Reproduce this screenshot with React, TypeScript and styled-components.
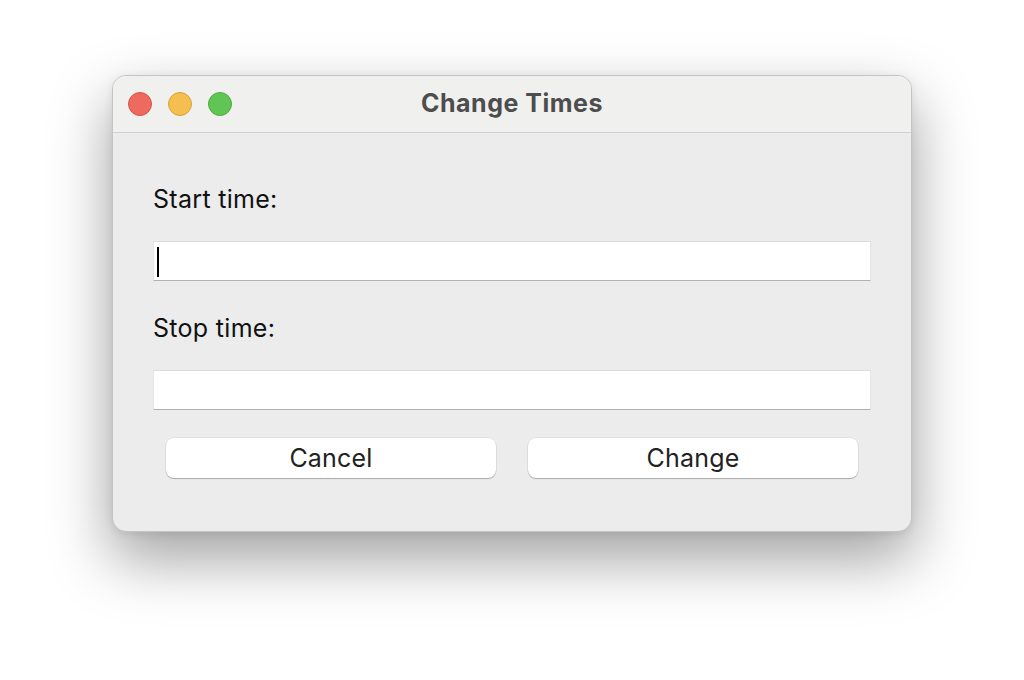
import React from "react";
import styled, { createGlobalStyle } from "styled-components";

const Global = createGlobalStyle`
  html, body { margin: 0; padding: 0; background: #ffffff; }
  body { font-family: Inter, "Noto Sans", sans-serif; }
`;

const Page = styled.div`
  width: 1024px;
  height: 680px;
  box-sizing: border-box;
  padding: 75px 112px 0 112px;
`;

const Window = styled.div`
  width: 800px;
  height: 457px;
  box-sizing: border-box;
  border: 1px solid #c4c4c4;
  border-radius: 14px;
  background: #ececec;
  overflow: hidden;
  display: flex;
  flex-direction: column;
  box-shadow: 0 26px 60px 2px rgba(0, 0, 0, 0.36), 0 2px 8px rgba(0, 0, 0, 0.08);
`;

const TitleBar = styled.div`
  position: relative;
  height: 57px;
  flex: none;
  box-sizing: border-box;
  background: #f0f0ef;
  border-bottom: 1px solid #d0d0d0;
  display: flex;
  justify-content: center;
  padding-top: 12px;
`;

const Lights = styled.div`
  position: absolute;
  left: 15px;
  top: 16px;
  display: flex;
  gap: 16px;
`;

const Light = styled.span<{ $fill: string; $edge: string }>`
  width: 24px;
  height: 24px;
  border-radius: 50%;
  box-sizing: border-box;
  background: ${(p) => p.$fill};
  border: 1px solid ${(p) => p.$edge};
`;

const Title = styled.div`
  font-size: 25px;
  font-weight: 700;
  letter-spacing: 0.5px;
  line-height: normal;
  color: #4d4d4d;
`;

const Content = styled.div`
  display: flex;
  flex-direction: column;
  padding: 54px 40px 0 40px;
`;

const Label = styled.div<{ $gapTop?: number }>`
  margin-top: ${(p) => p.$gapTop ?? 0}px;
  font-size: 25px;
  letter-spacing: 0.3px;
  line-height: 24px;
  color: #111;
  height: 24px;
  white-space: nowrap;
`;

const Field = styled.div`
  position: relative;
  margin-top: 30px;
  width: 718px;
  height: 40px;
  box-sizing: border-box;
  background: #fff;
  border-top: 1px solid #dcdcdc;
  border-left: 1px solid #e4e4e4;
  border-right: 1px solid #e4e4e4;
  border-bottom: 1px solid #b2b2b2;
`;

const Caret = styled.span`
  position: absolute;
  left: 3px;
  top: 5px;
  width: 2px;
  height: 30px;
  background: #000;
`;

const Buttons = styled.div`
  display: flex;
  gap: 32px;
  margin-top: 28px;
  padding-left: 13px;
`;

const Button = styled.div`
  width: 330px;
  height: 40px;
  box-sizing: border-box;
  border-radius: 8px;
  background: #fff;
  display: flex;
  align-items: center;
  justify-content: center;
  font-size: 25px;
  letter-spacing: 0.2px;
  color: #222;
  box-shadow: 0 1px 1px rgba(0, 0, 0, 0.25), 0 0 0 0.5px rgba(0, 0, 0, 0.08);
`;

export default function App() {
  return (
    <Page>
      <Global />
      <Window>
        <TitleBar>
          <Lights>
            <Light $fill="#ee6a5f" $edge="#d5534a" />
            <Light $fill="#f5bf4f" $edge="#d9a23a" />
            <Light $fill="#61c554" $edge="#4eab42" />
          </Lights>
          <Title>Change Times</Title>
        </TitleBar>
        <Content>
          <Label>Start time:</Label>
          <Field>
            <Caret />
          </Field>
          <Label $gapTop={35}>Stop time:</Label>
          <Field />
          <Buttons>
            <Button>Cancel</Button>
            <Button>Change</Button>
          </Buttons>
        </Content>
      </Window>
    </Page>
  );
}
